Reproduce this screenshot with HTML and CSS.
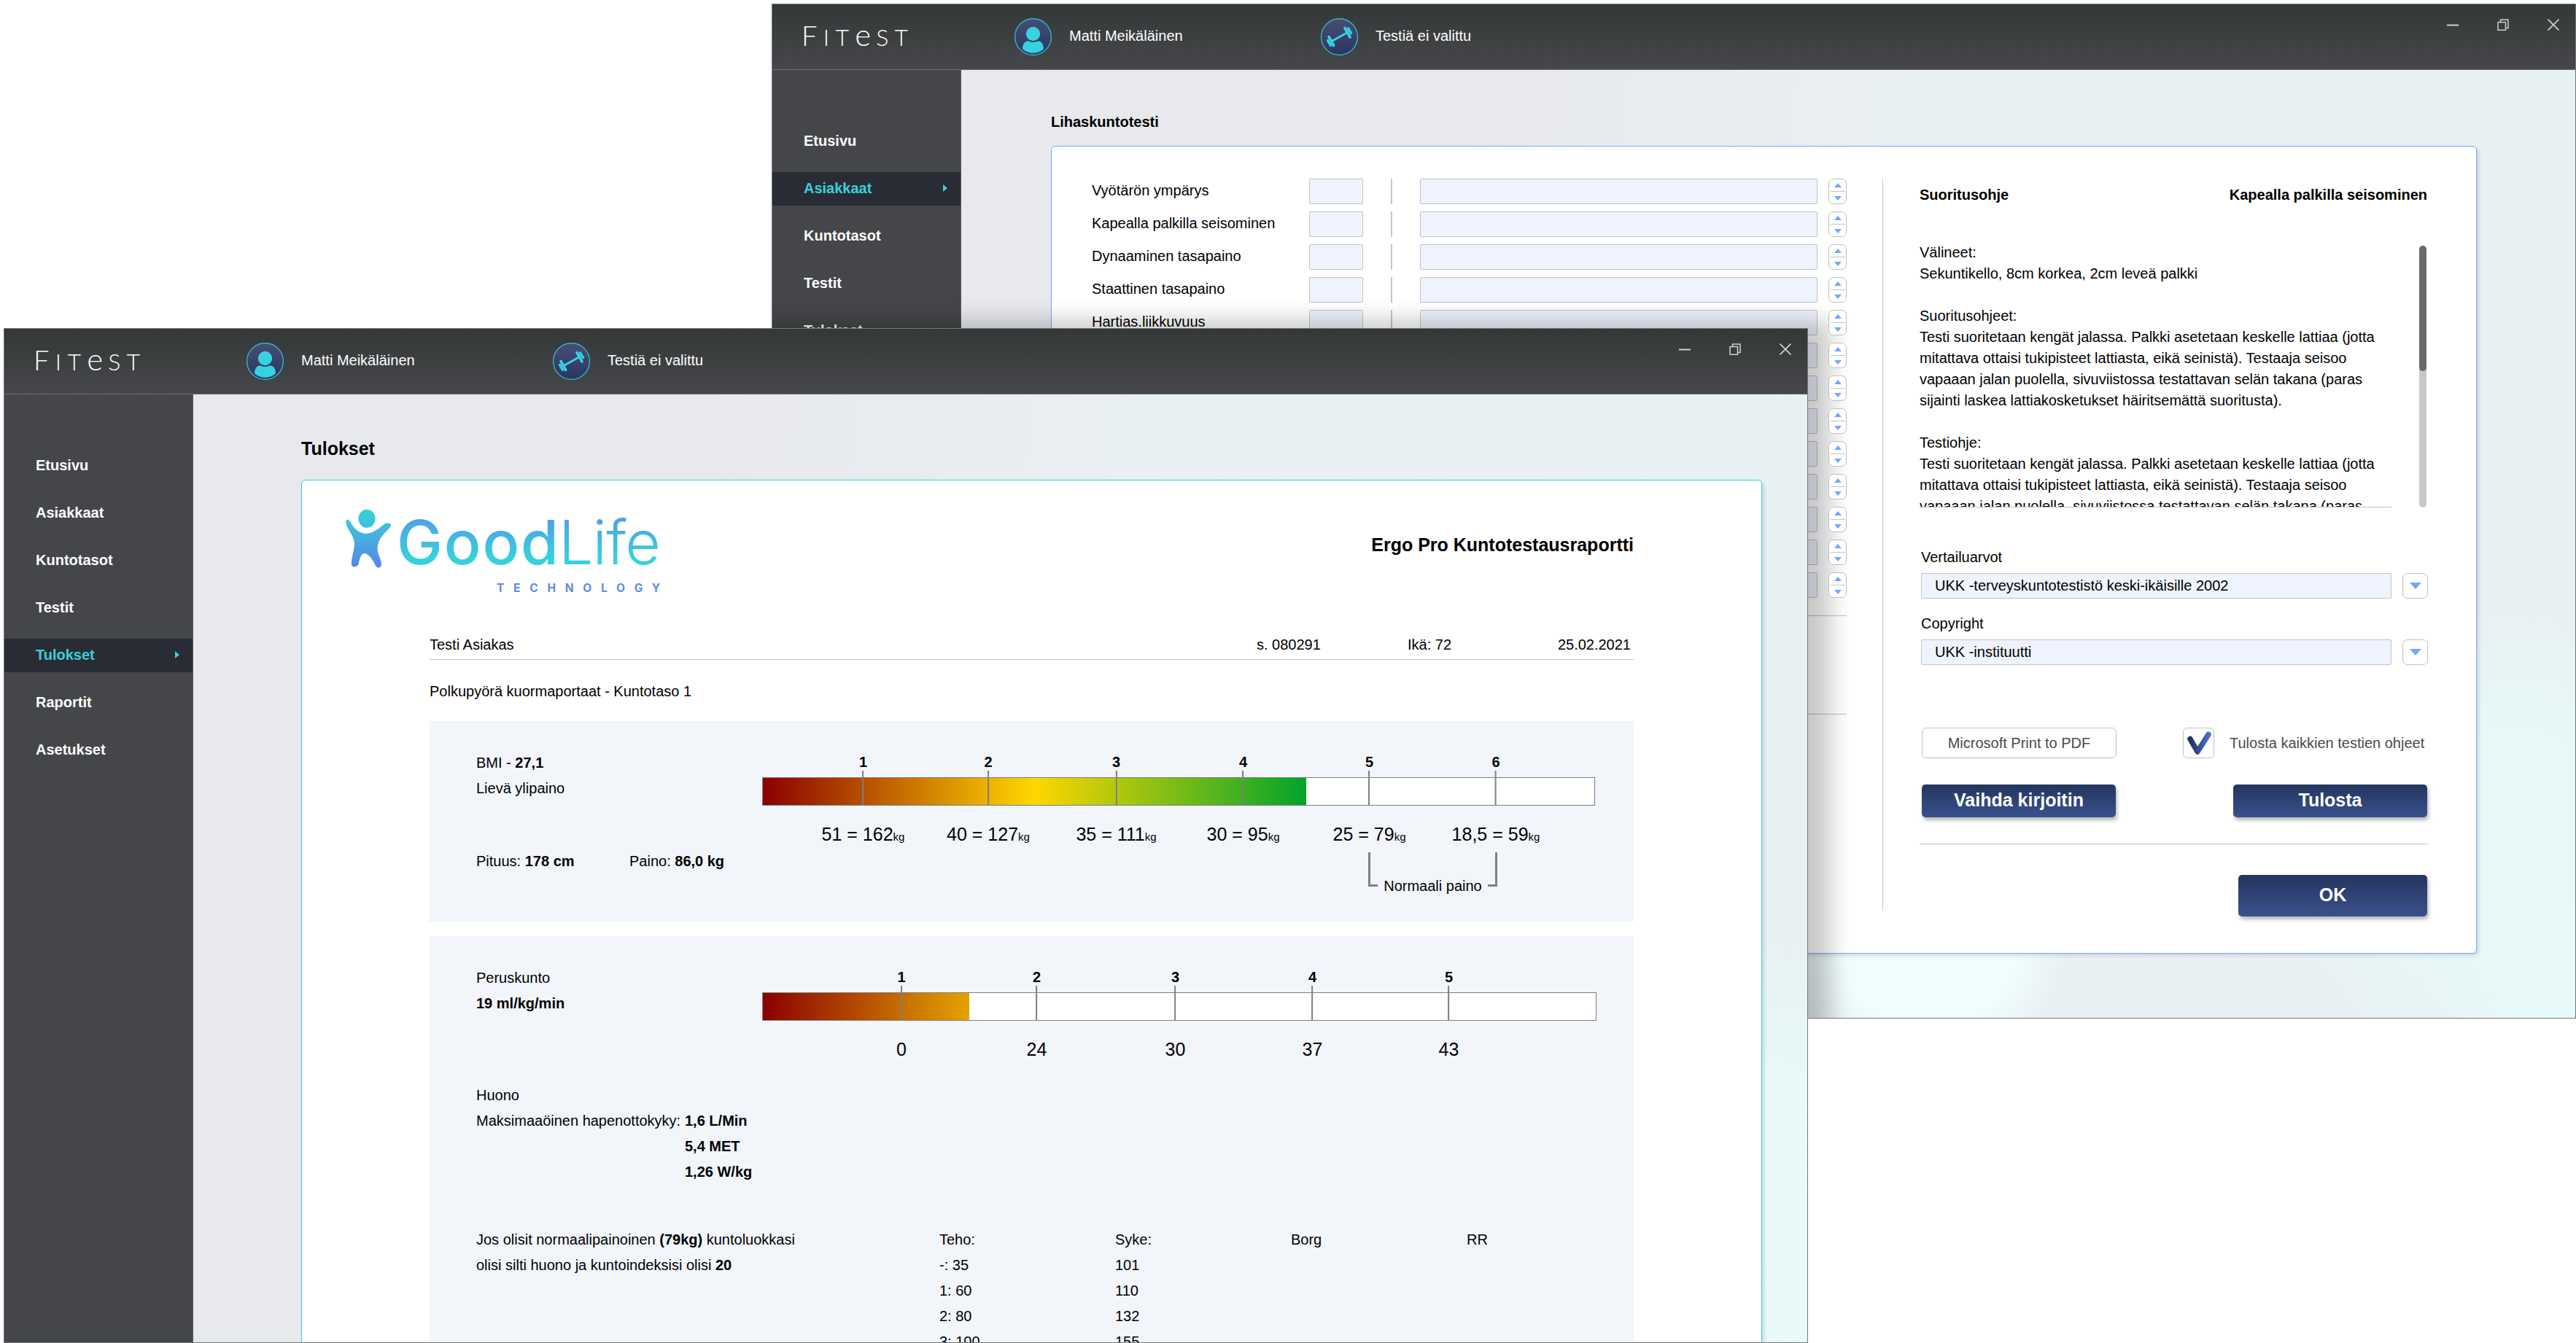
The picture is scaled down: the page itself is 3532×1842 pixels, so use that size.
FILE: index.html
```html
<!DOCTYPE html>
<html lang="fi">
<head>
    <meta charset="UTF-8">
    <title>Fitest</title>
    <link rel="stylesheet" href="styles.css">
</head>
<body>

<!-- shared icons -->
<svg class="defs" width="0" height="0">
    <defs>
        <linearGradient id="circle" x1="0" y1="0" x2="0" y2="1">
            <stop offset="0" stop-color="#464f74"/>
            <stop offset="1" stop-color="#2a3562"/>
        </linearGradient>
        <linearGradient id="man" x1="0" y1="698" x2="0" y2="780" gradientUnits="userSpaceOnUse">
            <stop offset="0.1" stop-color="#36cfdc"/>
            <stop offset="1" stop-color="#5b82e8"/>
        </linearGradient>
        <linearGradient id="word" x1="0" y1="706" x2="0" y2="775" gradientUnits="userSpaceOnUse">
            <stop offset="0" stop-color="#559ae8"/>
            <stop offset="0.85" stop-color="#35d1dc"/>
        </linearGradient>
        <linearGradient id="tick" x1="0" y1="0" x2="1" y2="0">
            <stop offset="0" stop-color="#22335d"/>
            <stop offset="1" stop-color="#4770c4"/>
        </linearGradient>
        <symbol id="user" viewBox="0 0 51 51">
            <circle cx="25.5" cy="25.5" r="24.9" fill="url(#circle)" stroke="#35c5d4" stroke-width="1.2"/>
            <circle cx="25.5" cy="21.5" r="9.7" fill="#37d2df"/>
            <path d="M18.500 31.200 Q25.500 34.800 32.500 31.200 C37 31.500 40 36 40 42 Q34 47.800 25.500 47.800 Q17 47.800 11 42 C11 36 14 31.500 18.500 31.200 Z" fill="#37d2df"/>
        </symbol>
        <symbol id="dumbbell" viewBox="0 0 51 51">
            <circle cx="25.500" cy="25.500" r="24.9" fill="url(#circle)" stroke="#35c5d4" stroke-width="1.2"/>
            <g stroke="#37d2df" stroke-linecap="round" fill="none">
                <path d="M15 31.500 L36.500 19.500" stroke-width="3"/>
                <path d="M11 25.500 L17.700 37.500 M33 13.500 L40 26" stroke-width="3.6"/>
                <path d="M9.500 30.500 L13.500 37.300 M37.500 14 L41.500 20.500" stroke-width="3.4"/>
            </g>
        </symbol>
        <symbol id="min" viewBox="0 0 16 16"><path d="M0 8.500 H16" stroke="#cfcfcf" stroke-width="2"/></symbol>
        <symbol id="max" viewBox="0 0 16 16">
            <path d="M1 4.500 H11.500 V15.200 H1 Z M4.500 4 V1 H15 V12.500 H12" fill="none" stroke="#cfcfcf" stroke-width="1.500"/>
        </symbol>
        <symbol id="close" viewBox="0 0 16 16"><path d="M0.500 0.500 L15.500 15.500 M15.500 0.500 L0.500 15.500" stroke="#cfcfcf" stroke-width="1.700"/></symbol>
    </defs>
</svg>

<div class="window window-back">
    <div class="topbar">
        <div class="brand"><span class="big">F</span>IT<span class="low">e</span>ST</div>
        <div class="info"><svg class="avatar"><use href="#user"/></svg><span>Matti Meikäläinen</span></div>
        <div class="info"><svg class="avatar"><use href="#dumbbell"/></svg><span>Testiä ei valittu</span></div>
        <div class="controls">
            <svg><use href="#min"/></svg>
            <svg><use href="#max"/></svg>
            <svg><use href="#close"/></svg>
        </div>
    </div>
    <div class="main">
        <div class="sidebar">
            <a class="item">Etusivu</a>
            <a class="item active">Asiakkaat</a>
            <a class="item">Kuntotasot</a>
            <a class="item">Testit</a>
            <a class="item">Tulokset</a>
        </div>
        <div class="content form-content">
            <h2 class="form-title">Lihaskuntotesti</h2>
            <div class="panel form-panel">
                <div class="rows">
                    <div class="row"><label>Vyötärön ympärys</label><i class="short"></i><i class="sep"></i><i class="long"></i><b class="spin"></b></div>
                    <div class="row"><label>Kapealla palkilla seisominen</label><i class="short"></i><i class="sep"></i><i class="long"></i><b class="spin"></b></div>
                    <div class="row"><label>Dynaaminen tasapaino</label><i class="short"></i><i class="sep"></i><i class="long"></i><b class="spin"></b></div>
                    <div class="row"><label>Staattinen tasapaino</label><i class="short"></i><i class="sep"></i><i class="long"></i><b class="spin"></b></div>
                    <div class="row"><label>Hartias.liikkuvuus</label><i class="short"></i><i class="sep"></i><i class="long"></i><b class="spin"></b></div>
                    <div class="row"><label></label><i class="short"></i><i class="sep"></i><i class="long"></i><b class="spin"></b></div>
                    <div class="row"><label></label><i class="short"></i><i class="sep"></i><i class="long"></i><b class="spin"></b></div>
                    <div class="row"><label></label><i class="short"></i><i class="sep"></i><i class="long"></i><b class="spin"></b></div>
                    <div class="row"><label></label><i class="short"></i><i class="sep"></i><i class="long"></i><b class="spin"></b></div>
                    <div class="row"><label></label><i class="short"></i><i class="sep"></i><i class="long"></i><b class="spin"></b></div>
                    <div class="row"><label></label><i class="short"></i><i class="sep"></i><i class="long"></i><b class="spin"></b></div>
                    <div class="row"><label></label><i class="short"></i><i class="sep"></i><i class="long"></i><b class="spin"></b></div>
                    <div class="row"><label></label><i class="short"></i><i class="sep"></i><i class="long"></i><b class="spin"></b></div>
                    <div class="rule rule-first"></div>
                    <div class="rule rule-second"></div>
                </div>
                <div class="guide">
                    <div class="guide-head"><span>Suoritusohje</span><span>Kapealla palkilla seisominen</span></div>
                    <div class="guide-text">
                        <p>Välineet:<br>
                        Sekuntikello, 8cm korkea, 2cm leveä palkki<br><br>
                        Suoritusohjeet:<br>
                        Testi suoritetaan kengät jalassa. Palkki asetetaan keskelle lattiaa (jotta<br>
                        mitattava ottaisi tukipisteet lattiasta, eikä seinistä). Testaaja seisoo<br>
                        vapaaan jalan puolella, sivuviistossa testattavan selän takana (paras<br>
                        sijainti laskea lattiakosketukset häiritsemättä suoritusta).<br><br>
                        Testiohje:<br>
                        Testi suoritetaan kengät jalassa. Palkki asetetaan keskelle lattiaa (jotta<br>
                        mitattava ottaisi tukipisteet lattiasta, eikä seinistä). Testaaja seisoo<br>
                        vapaaan jalan puolella, sivuviistossa testattavan selän takana (paras</p>
                        <div class="scroll"><div class="thumb"></div></div>
                    </div>
                    <div class="field field-first">
                        <label>Vertailuarvot</label>
                        <div class="combo"><div class="value">UKK -terveyskuntotestistö keski-ikäisille 2002</div><div class="drop"></div></div>
                    </div>
                    <div class="field">
                        <label>Copyright</label>
                        <div class="combo"><div class="value">UKK -instituutti</div><div class="drop"></div></div>
                    </div>
                    <div class="print">
                        <div class="printer">Microsoft Print to PDF</div>
                        <div class="check">
                            <svg viewBox="0 0 43 42"><path d="M10 15.500 L20 33 L35 9.500" fill="none" stroke="url(#tick)" stroke-width="7.500" stroke-linecap="round" stroke-linejoin="round"/></svg>
                        </div>
                        <span>Tulosta kaikkien testien ohjeet</span>
                    </div>
                    <div class="buttons">
                        <button>Vaihda kirjoitin</button>
                        <button>Tulosta</button>
                    </div>
                    <div class="rule guide-rule"></div>
                    <button class="ok">OK</button>
                </div>
            </div>
        </div>
    </div>
    <div class="shade"></div>
</div>

<div class="window window-front">
    <div class="topbar">
        <div class="brand"><span class="big">F</span>IT<span class="low">e</span>ST</div>
        <div class="info"><svg class="avatar"><use href="#user"/></svg><span>Matti Meikäläinen</span></div>
        <div class="info"><svg class="avatar"><use href="#dumbbell"/></svg><span>Testiä ei valittu</span></div>
        <div class="controls">
            <svg><use href="#min"/></svg>
            <svg><use href="#max"/></svg>
            <svg><use href="#close"/></svg>
        </div>
    </div>
    <div class="main">
        <div class="sidebar">
            <a class="item">Etusivu</a>
            <a class="item">Asiakkaat</a>
            <a class="item">Kuntotasot</a>
            <a class="item">Testit</a>
            <a class="item active">Tulokset</a>
            <a class="item">Raportit</a>
            <a class="item">Asetukset</a>
        </div>
        <div class="content report-content">
            <h1 class="report-title">Tulokset</h1>
            <div class="panel report-panel">
                <div class="report-head">
                    <svg class="goodlife" viewBox="472 695 440 125">
                        <ellipse cx="503" cy="711.300" rx="11.6" ry="12.500" fill="url(#man)"/>
                        <path d="M474 715 Q476 710 480 715 C486 727 494 732 503 732 C513 731 520 724 528 718 Q537 716 536 722 C528 731 518 738 517.500 752 C517.500 761 523 767 523 775 Q520 782 515 776 C511 768 506 759 499 759 C493 761 493 770 491 775 Q485 780 482 775 C481 766 486 756 486 745 C485 733 475 726 474 715 Z" fill="url(#man)"/>
                        <text x="544" y="774" font-size="84" font-weight="500" textLength="222" fill="url(#word)">Good</text>
                        <text x="766" y="774" font-size="84" font-weight="300" textLength="140" fill="url(#word)">Life</text>
                        <text class="tech" x="681" y="811.500" textLength="224">TECHNOLOGY</text>
                    </svg>
                    <div class="report-name">Ergo Pro Kuntotestausraportti</div>
                </div>
                <div class="report">
                    <div class="meta"><span>Testi Asiakas</span><span>s. 080291</span><span>Ikä: 72</span><span>25.02.2021</span></div>
                    <div class="test-name">Polkupyörä kuormaportaat - Kuntotaso 1</div>

                    <div class="box box-bmi">
                        <div class="chart-row">
                            <div class="facts">
                                <div>BMI - <b>27,1</b></div>
                                <div>Lievä ylipaino</div>
                                <div class="body-size"><span>Pituus: <b>178 cm</b></span><span>Paino: <b>86,0 kg</b></span></div>
                            </div>
                            <div class="bar">
                                <div class="fill" style="width: 745px"></div>
                                <div class="mark" style="left: 137.5px"><b>1</b><i></i><span>51 = 162<small>kg</small></span></div>
                                <div class="mark" style="left: 309px"><b>2</b><i></i><span>40 = 127<small>kg</small></span></div>
                                <div class="mark" style="left: 484.5px"><b>3</b><i></i><span>35 = 111<small>kg</small></span></div>
                                <div class="mark" style="left: 658.5px"><b>4</b><i></i><span>30 = 95<small>kg</small></span></div>
                                <div class="mark" style="left: 831.5px"><b>5</b><i></i><span>25 = 79<small>kg</small></span></div>
                                <div class="mark" style="left: 1005px"><b>6</b><i></i><span>18,5 = 59<small>kg</small></span></div>
                                <div class="range"><i class="left"></i><span>Normaali paino</span><i class="right"></i></div>
                            </div>
                        </div>
                    </div>

                    <div class="box box-fitness">
                        <div class="chart-row">
                            <div class="facts">
                                <div>Peruskunto</div>
                                <div><b>19 ml/kg/min</b></div>
                            </div>
                            <div class="bar bar-wide">
                                <div class="fill" style="width: 283px"></div>
                                <div class="mark" style="left: 190px"><b>1</b><i></i><span>0</span></div>
                                <div class="mark" style="left: 375.5px"><b>2</b><i></i><span>24</span></div>
                                <div class="mark" style="left: 565.5px"><b>3</b><i></i><span>30</span></div>
                                <div class="mark" style="left: 753.5px"><b>4</b><i></i><span>37</span></div>
                                <div class="mark" style="left: 940.5px"><b>5</b><i></i><span>43</span></div>
                            </div>
                        </div>
                        <div class="oxygen">
                            <div>Huono<br>Maksimaaöinen hapenottokyky:</div>
                            <div class="oxygen-values">1,6 L/Min<br>5,4 MET<br>1,26 W/kg</div>
                        </div>
                        <div class="steps">
                            <div>Jos olisit normaalipainoinen <b>(79kg)</b> kuntoluokkasi<br>olisi silti huono ja kuntoindeksisi olisi <b>20</b></div>
                            <div>Teho:<br>-: 35<br>1: 60<br>2: 80<br>3: 100</div>
                            <div>Syke:<br>101<br>110<br>132<br>155</div>
                            <div>Borg</div>
                            <div>RR</div>
                        </div>
                    </div>
                </div>
            </div>
        </div>
    </div>
</div>

</body>
</html>
```

FILE: styles.css
```css
* {
    box-sizing: border-box;
}
body {
    margin: 0;
    width: 3532px;
    height: 1842px;
    position: relative;
    overflow: hidden;
    background: #fff;
    font-family: "Liberation Sans", Arial, sans-serif;
    font-size: 20px;
    line-height: 22px;
    color: #000;
    white-space: nowrap;
}
h1, h2, p {
    margin: 0;
}
.defs {
    position: absolute;
}

/* windows */
.window {
    position: absolute;
    width: 2474px;
    height: 1392px;
    border: 1px solid #727675;
    overflow: hidden;
    display: flex;
    flex-direction: column;
}
.window-back {
    left: 1058px;
    top: 5px;
}
.window-front {
    left: 5px;
    top: 450px;
    z-index: 3;
}
.topbar {
    height: 90px;
    flex: none;
    display: flex;
    align-items: center;
    background: linear-gradient(#343837, #46474b);
    border-bottom: 1px solid #6c6d70;
    color: #fff;
}
.brand {
    width: 332px;
    height: 36px;
    margin-top: -8px;
    padding-left: 40px;
    font-family: Lato, "Open Sans", sans-serif;
    font-weight: 300;
    font-size: 32px;
    line-height: 36px;
    letter-spacing: 8.3px;
}
.brand .big {
    font-size: 38px;
}
.brand .low {
    font-size: 42px;
    letter-spacing: 7px;
}
.info {
    width: 420px;
    display: flex;
    align-items: center;
    gap: 24px;
}
.info span {
    padding-bottom: 3px;
}
.avatar {
    width: 51px;
    height: 51px;
}
.controls {
    margin-left: auto;
    align-self: flex-start;
    padding: 20px 22px 0 0;
    display: flex;
    gap: 53px;
}
.controls svg {
    width: 16px;
    height: 16px;
}
.main {
    flex: 1;
    min-height: 0;
    display: flex;
}
.sidebar {
    width: 259px;
    flex: none;
    padding-top: 75px;
    display: flex;
    flex-direction: column;
    gap: 19px;
    background: #454649;
    border-right: 1px solid #5c5d60;
}
.item {
    height: 46px;
    padding: 0 18px 2px 43px;
    display: flex;
    align-items: center;
    justify-content: space-between;
    color: #fff;
    font-weight: bold;
}
.active {
    background: #292c34;
    color: #37d0dc;
}
.active::after {
    content: "";
    border-left: 6px solid #37d0dc;
    border-top: 5px solid transparent;
    border-bottom: 5px solid transparent;
}
.content {
    flex: 1;
    background:
        radial-gradient(circle 190px at 1325px 1190px, rgba(241, 254, 253, 0.95) 65%, rgba(241, 254, 253, 0) 100%),
        radial-gradient(circle 320px at 2125px 1060px, rgba(231, 250, 249, 0.85) 45%, rgba(231, 250, 249, 0) 100%),
        radial-gradient(circle 200px at 2213px 1300px, rgba(231, 252, 251, 0.9) 20%, rgba(231, 252, 251, 0) 100%),
        linear-gradient(97deg, #e8e9ed 30%, #e9f0f3 56%, #e8f1f4 100%);
}
.panel {
    background: #fff;
    border: 1px solid #74abfc;
    border-radius: 6px;
    box-shadow: 3px 3px 5px rgba(0, 0, 0, 0.12);
}

/* test form */
.form-content {
    padding: 60px 0 0 123px;
}
.form-title {
    font-size: 20px;
    margin-bottom: 22px;
}
.form-panel {
    width: 1955px;
    height: 1108px;
    padding: 44px 0 0 55px;
    display: flex;
}
.rows {
    width: 1035px;
    margin-right: 49px;
}
.row {
    height: 35px;
    margin-bottom: 10px;
    display: flex;
    align-items: center;
}
.row label {
    width: 298px;
    padding-bottom: 4px;
}
.short, .long {
    height: 35px;
    background: #eff3fe;
    border: 1px solid #c0c2c6;
    border-radius: 2px;
}
.short {
    width: 74px;
}
.long {
    width: 545px;
}
.sep {
    width: 2px;
    height: 35px;
    margin: 0 38px;
    background: #c6c6c6;
}
.spin {
    width: 25px;
    height: 35px;
    margin-left: 15px;
    position: relative;
    z-index: 2;
    display: flex;
    flex-direction: column;
    align-items: center;
    justify-content: center;
    gap: 12px;
    background: linear-gradient(#c4c4c4, #c4c4c4) center / 20px 1px no-repeat #fff;
    border: 1px solid #bfbfbf;
    border-radius: 7px;
}
.spin::before, .spin::after {
    content: "";
    border-left: 5px solid transparent;
    border-right: 5px solid transparent;
}
.spin::before {
    border-bottom: 6px solid #70a8fe;
}
.spin::after {
    border-top: 6px solid #70a8fe;
}
.rule {
    height: 1px;
    background: #c0c0c0;
}
.rule-first {
    margin-top: 24px;
}
.rule-second {
    margin-top: 134px;
}
.guide {
    width: 748px;
    height: 1004px;
    padding: 11px 0 0 50px;
    border-left: 1px solid #c6c6c6;
}
.guide-head {
    display: flex;
    justify-content: space-between;
    font-weight: bold;
    margin-bottom: 54px;
    padding-right: 1px;
}
.guide-text {
    height: 364px;
    display: flex;
    justify-content: space-between;
    line-height: 29px;
}
.guide-text p {
    width: 647px;
    height: 364px;
    overflow: hidden;
    border-bottom: 1px solid #c0c0c0;
}
.scroll {
    width: 10px;
    height: 359px;
    margin: 5px 2px 0 0;
    background: #c8c8c8;
    border-radius: 5px;
}
.thumb {
    height: 172px;
    background: #6a6a6a;
    border-radius: 5px;
}
.field {
    margin: 23px 0 0 2px;
}
.field-first {
    margin-top: 57px;
}
.field label {
    display: block;
}
.combo {
    margin-top: 11px;
    display: flex;
    gap: 15px;
}
.value {
    width: 645px;
    height: 35px;
    padding-left: 18px;
    line-height: 33px;
    background: #eff3fe;
    border: 1px solid #c0c2c6;
    border-radius: 2px;
}
.drop {
    width: 35px;
    height: 35px;
    display: flex;
    align-items: center;
    justify-content: center;
    border: 1px solid #bfbfbf;
    border-radius: 7px;
}
.drop::after {
    content: "";
    border-left: 8px solid transparent;
    border-right: 8px solid transparent;
    border-top: 9px solid #70a8fe;
}
.print {
    margin: 86px 4px 0 3px;
    display: flex;
    align-items: center;
    color: #4a4a4e;
}
.printer {
    width: 267px;
    height: 42px;
    line-height: 40px;
    text-align: center;
    border: 1px solid #c0c0c0;
    border-radius: 6px;
}
.check {
    width: 43px;
    height: 42px;
    margin: 0 21px 0 91px;
    border: 1px solid #c0c0c0;
    border-radius: 6px;
}
.check svg {
    display: block;
    width: 43px;
    height: 42px;
    margin: -1px;
}
.buttons {
    margin: 36px 1px 0 3px;
    display: flex;
    justify-content: space-between;
}
button {
    width: 266px;
    height: 45px;
    padding: 0 0 3px;
    border: none;
    border-radius: 5px;
    background: linear-gradient(#24355e, #39528d);
    box-shadow: 2px 4px 5px rgba(0, 0, 0, 0.28);
    color: #fff;
    font: bold 25px "Liberation Sans", Arial, sans-serif;
}
.guide-rule {
    margin-top: 36px;
}
.ok {
    display: block;
    width: 259px;
    height: 57px;
    margin: 42px 1px 0 auto;
}

/* shadow the front window drops on the back one */
.shade {
    position: absolute;
    z-index: 1;
    left: -1054px;
    top: 444px;
    width: 2474px;
    height: 1392px;
    box-shadow: 20px 0 30px 10px rgba(0, 0, 0, 0.22);
}

/* report */
.report-content {
    padding: 60px 0 0 148px;
}
.report-title {
    font-size: 25px;
    line-height: 28px;
    margin-bottom: 29px;
}
.report-panel {
    width: 2003px;
    height: 1300px;
    padding-top: 36px;
    border-color: #35d0dc;
}
.report-head {
    height: 125px;
    padding: 0 175px 0 58px;
    display: flex;
    justify-content: space-between;
}
.goodlife {
    width: 440px;
    height: 125px;
    font-family: Inter, sans-serif;
}
.tech {
    font-size: 15.5px;
    font-weight: 700;
    fill: #5f8ae8;
}
.report-name {
    margin-top: 38px;
    font-size: 25px;
    line-height: 28px;
    font-weight: bold;
}
.report {
    width: 1651px;
    margin: 53px 0 0 175px;
}
.meta {
    padding: 0 4px 9px 0;
    display: grid;
    grid-template-columns: 1134px 207px 1fr auto;
    border-bottom: 1px solid #c0c0c0;
}
.test-name {
    margin: 32px 0 30px;
}
.box {
    padding: 40px 0 0 64px;
    background: #f2f5fa;
    line-height: 35px;
}
.box-bmi {
    height: 275px;
    margin-bottom: 20px;
}
.box-fitness {
    height: 700px;
}
.chart-row {
    display: flex;
}
.facts {
    width: 392px;
}
.body-size {
    display: flex;
    margin-top: 65px;
}
.body-size span {
    width: 210px;
    flex: none;
}
.bar {
    width: 1142px;
    height: 39px;
    margin-top: 37px;
    position: relative;
    background: #fff;
    border: 1px solid #7d7d7d;
}
.bar-wide {
    width: 1144px;
}
.fill {
    height: 37px;
    background: linear-gradient(90deg, #8b0000, #ffd700 50%, #00a42a) 0 0 / 745px 100% no-repeat;
}
.mark {
    position: absolute;
    top: -33px;
    transform: translateX(-50%);
    display: flex;
    flex-direction: column;
    align-items: center;
    line-height: 22px;
}
.mark i {
    width: 2px;
    height: 48px;
    margin: 1px 0 25px;
    background: #808080;
}
.mark span {
    font-size: 25px;
    line-height: 28px;
}
.mark small {
    font-size: 15px;
}
.range {
    position: absolute;
    left: 830px;
    top: 102px;
    width: 177px;
    display: flex;
    justify-content: space-between;
    align-items: flex-end;
    line-height: 22px;
}
.range i {
    width: 13px;
    height: 47px;
    border: 0 solid #808080;
    border-bottom-width: 3px;
}
.range .left {
    border-left-width: 3px;
}
.range .right {
    border-right-width: 3px;
}
.range span {
    margin-bottom: -10px;
}
.oxygen {
    margin-top: 85px;
    display: flex;
}
.oxygen > div {
    width: 286px;
}
.oxygen .oxygen-values {
    padding-top: 35px;
    font-weight: bold;
}
.steps {
    margin-top: 58px;
    display: grid;
    grid-template-columns: 635px 241px 241px 241px auto;
}
```
